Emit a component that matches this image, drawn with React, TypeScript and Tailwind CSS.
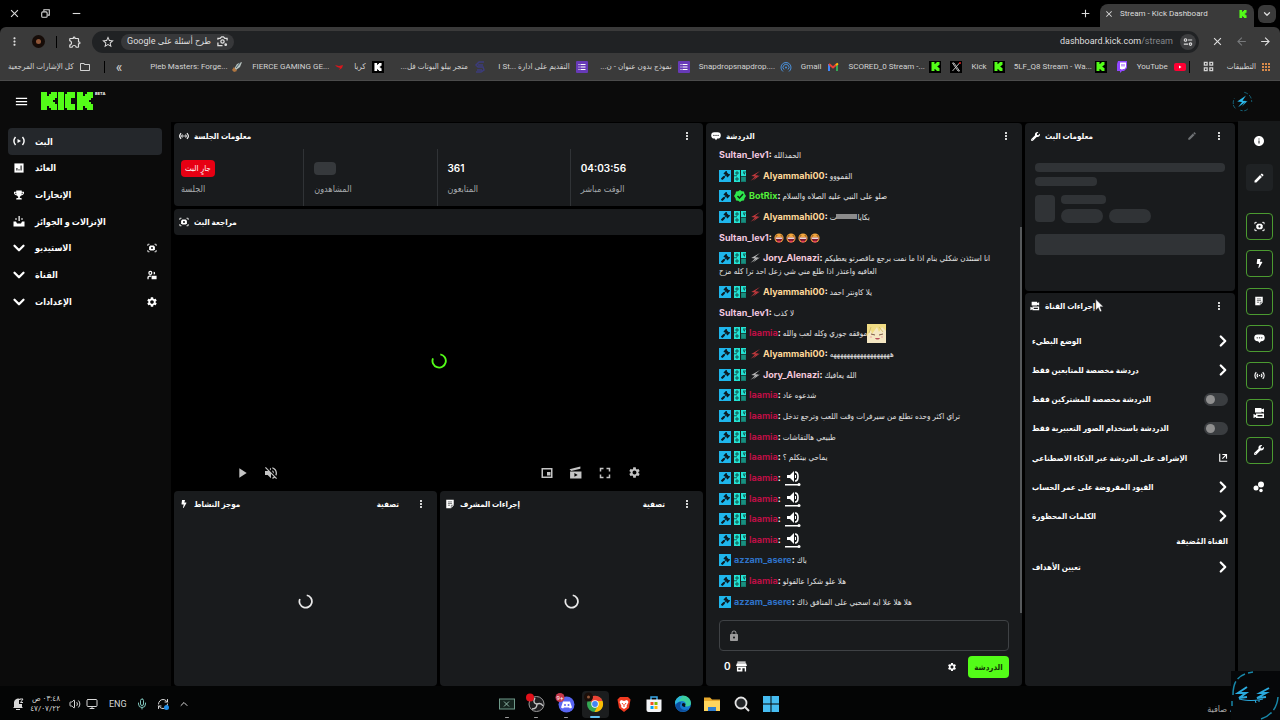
import type { ReactNode } from 'react';
import { FaBolt, FaGavel, FaTrophy, FaWrench } from 'react-icons/fa';
import {
  MdAdd,
  MdApps,
  MdArrowBack,
  MdArrowForward,
  MdClose,
  MdEdit,
  MdFullscreen,
  MdInfo,
  MdLock,
  MdMenu,
  MdMoreVert,
  MdOutlineExtension,
  MdOutlineFolder,
  MdPlayArrow,
  MdRemove,
  MdSettings,
  MdStarOutline,
  MdVolumeOff,
} from 'react-icons/md';
import { SiKick } from 'react-icons/si';
import { ChevronDown, ChevronRight, ChevronUp, Mic, Monitor, RefreshCw, Volume2 } from 'lucide-react';

/* ---------- icons ---------- */

function BroadcastIcon({ className = 'size-3' }: { className?: string }) {
  return (
    <svg viewBox="0 0 24 24" className={className} fill="none" stroke="currentColor" strokeWidth="2.6">
      <path d="M5 5C1 9 1 15 5 19M19 5c4 4 4 10 0 14M8.500 8.500c-2 2-2 5 0 7M15.500 8.500c2 2 2 5 0 7" />
      <circle cx="12" cy="12" r="1.600" fill="currentColor" stroke="none" />
    </svg>
  );
}

function LiveIcon({ className = 'size-3' }: { className?: string }) {
  return (
    <svg viewBox="0 0 24 24" className={className} fill="none" stroke="currentColor" strokeWidth="2.8">
      <path d="M5 4C1 9 1 15 5 20M19 4c4 5 4 11 0 16" />
      <path d="M9 8l7 4-7 4z" fill="currentColor" stroke="none" />
    </svg>
  );
}

function PreviewIcon({ className = 'size-3' }: { className?: string }) {
  return (
    <svg viewBox="0 0 24 24" className={className} fill="none" stroke="currentColor" strokeWidth="2">
      <path d="M2 7V3h4M18 3h4v4M22 17v4h-4M6 21H2v-4" />
      <path d="M8 6h8l3 3v6l-3 3H8l-3-3V9z" fill="currentColor" stroke="none" />
      <circle cx="12" cy="12" r="2.500" fill="#191b1d" stroke="none" />
    </svg>
  );
}

function ChatIcon({ className = 'size-3' }: { className?: string }) {
  return (
    <svg viewBox="0 0 24 24" className={className} fill="currentColor">
      <path d="M8 3h8a7 7 0 0 1 0 15h-1l-3 4-3-4H8A7 7 0 0 1 8 3z" />
      <g fill="#191b1d">
        <circle cx="7" cy="10.500" r="1.500" />
        <circle cx="12" cy="10.500" r="1.500" />
        <circle cx="17" cy="10.500" r="1.500" />
      </g>
    </svg>
  );
}

function NoteIcon({ className = 'size-3' }: { className?: string }) {
  return (
    <svg viewBox="0 0 24 24" className={className}>
      <path d="M3 2h18v13l-6 7H3z" fill="currentColor" />
      <path d="M7 7h10M7 11h10M7 15h5" stroke="#191b1d" strokeWidth="1.400" />
      <path d="M15 22v-7h6" fill="none" stroke="#191b1d" strokeWidth="1.200" />
    </svg>
  );
}

function CamerasIcon({ className = 'size-3' }: { className?: string }) {
  return (
    <svg viewBox="0 0 24 24" className={className} fill="currentColor">
      <path d="M4 2h13v3l5-2v8l-5-2v2H4z" />
      <path d="M6 13h16v9H6v-2l-5 2v-8l5 2zm3 3v3h10v-3z" fillRule="evenodd" />
    </svg>
  );
}

function ChartIcon() {
  return (
    <svg viewBox="0 0 24 24" className="size-[10px]">
      <path d="M1 1h22v22H1z" fill="currentColor" />
      <path d="M7 18v-6M12 18v-3M17 18V6" stroke="#0b0b0b" strokeWidth="2.500" />
    </svg>
  );
}

function DropsIcon() {
  return (
    <svg viewBox="0 0 24 24" className="size-3" fill="currentColor">
      <path d="M1 13h5l2 4h8l2-4h5v10H1z" />
      <path d="M11 2h2.500v10H11zM5 6h2v4H5zM17 6h2v4h-2z" />
    </svg>
  );
}

function ChannelIcon() {
  return (
    <svg viewBox="0 0 24 24" className="size-[10px]" fill="currentColor">
      <path d="M8 2a5 5 0 1 1 0 10A5 5 0 0 1 8 2zm0 3a2 2 0 1 0 0 4 2 2 0 0 0 0-4z" fillRule="evenodd" />
      <path d="M1 22v-6l4-3h5v3H6l-2 2v4z" />
      <path d="M16 4a3.500 3.500 0 1 1 0 7zM11 14h12v8H11z" />
    </svg>
  );
}

function DotsIcon() {
  return (
    <svg viewBox="0 0 24 24" className="size-3" fill="currentColor">
      <circle cx="16" cy="7" r="6" />
      <circle cx="6" cy="14" r="5" />
      <circle cx="16" cy="19" r="3.500" />
    </svg>
  );
}

function ExternalIcon() {
  return (
    <svg viewBox="0 0 24 24" className="size-[9px]" fill="none" stroke="currentColor" strokeWidth="3">
      <path d="M2 2v20h20M9 4h11v11M20 4L9 15" />
    </svg>
  );
}

function ClipIcon() {
  return (
    <svg viewBox="0 0 24 24" className="size-[13px]" fill="currentColor">
      <path d="M1 6l20-5v4L4 9z" />
      <path d="M2 10h21v13H2zm8 3v7l6-3.500z" fillRule="evenodd" />
    </svg>
  );
}

function PipIcon() {
  return (
    <svg viewBox="0 0 24 24" className="size-[12px]" fill="currentColor">
      <path d="M1 2h22v20H1zm3 3v14h16V5z" fillRule="evenodd" />
      <path d="M12 10h7v7h-7z" />
    </svg>
  );
}

function ShopIcon() {
  return (
    <svg viewBox="0 0 24 24" className="size-[11px]" fill="currentColor">
      <path d="M3 1h18v3H3zM2 5h20l2 6H0z" />
      <path d="M2 12h20v11h-3v-7h-5v7H2zm3 4v3h5v-3z" fillRule="evenodd" />
    </svg>
  );
}

function Spinner({ className }: { className: string }) {
  return (
    <svg viewBox="0 0 24 24" className={className} fill="none" stroke="currentColor" strokeWidth="2.800">
      <path d="M14 2a10 10 0 1 1-11 6" />
    </svg>
  );
}

function StrikeIcon({ className }: { className: string }) {
  return (
    <svg viewBox="0 0 24 24" className={className} fill="currentColor">
      <path d="M24 0L3 12l9 1L1 24l20-13-9-1z" />
      <path d="M24 11L7 23l9-10z" />
    </svg>
  );
}

function BoltMark({ className }: { className: string }) {
  return (
    <svg viewBox="0 0 48 48" className={className} fill="none">
      <path d="M3 30A21 21 0 0 1 6 16M28 3c12 3 17 12 17 22M36 41c-5 5-10 5-17 3M3 32c2 5 4 8 8 10" stroke="#176d85" strokeWidth="2" strokeDasharray="9 4" />
      <path d="M32 10L12 24l11 1-9 12 20-14-10-1z" fill="#2bb8ea" />
      <path d="M36 22L22 36l8-11z" fill="#2bb8ea" />
    </svg>
  );
}

function KickWordmark() {
  return (
    <span role="img" aria-label="Kick" className="flex h-[18px] items-center text-[#53fc18]">
      <SiKick className="size-[18px] -mr-px" />
      <svg viewBox="0 0 19 18" className="h-[18px] w-[19px]" fill="currentColor">
        <rect x="1" width="6" height="18" />
        <rect x="10" width="8" height="6" />
        <rect x="8" y="2" width="6" height="14" />
        <rect x="10" y="12" width="8" height="6" />
      </svg>
      <SiKick className="size-[18px]" />
    </span>
  );
}

/* ---------- browser ---------- */

function KickFavicon() {
  return (
    <span className="flex size-3 shrink-0 items-center justify-center bg-black text-[#53fc18]">
      <SiKick className="size-[9px]" />
    </span>
  );
}

function FormsIcon() {
  return (
    <svg viewBox="0 0 12 12" className="size-3 shrink-0">
      <rect width="12" height="12" rx="1" fill="#673ab7" />
      <path d="M4.500 3.500h5M4.500 6h5M4.500 8.500h5" stroke="#fff" />
      <path d="M2.500 3.500h1M2.500 6h1M2.500 8.500h1" stroke="#fff" />
    </svg>
  );
}

interface Bookmark {
  title?: string;
  label: string;
  icon: ReactNode;
  rtl?: boolean;
  cut?: boolean;
}

const bookmarks: Bookmark[] = [
  {
    title: 'Pleb Masters: Forge...',
    label: 'Pleb Masters',
    cut: true,
    icon: (
      <svg viewBox="0 0 12 12" className="size-3 shrink-0">
        <path d="M11 1L6 3 3 8l2 1 4-3z" fill="#b9c4c0" />
        <path d="M3 6L1 9l2 2 3-1z" fill="#b07640" />
        <path d="M9 2L5 7" stroke="#4c6470" />
      </svg>
    ),
  },
  {
    title: 'FIERCE GAMING GE...',
    label: 'Fierce Gaming',
    cut: true,
    icon: (
      <svg viewBox="0 0 12 12" className="size-3 shrink-0" fill="#d8161c">
        <path d="M2 4l4 1 4-1-1 3-3 2 1-2-3-1z" />
      </svg>
    ),
  },
  {
    title: 'كريا',
    label: 'كريا',
    rtl: true,
    icon: (
      <span className="flex size-3 shrink-0 items-center justify-center bg-black text-white">
        <SiKick className="size-[8px]" />
      </span>
    ),
  },
  {
    title: 'متجر بيلو البوتات فل...',
    label: 'متجر بيلو',
    rtl: true,
    cut: true,
    icon: (
      <svg viewBox="0 0 12 12" className="size-3 shrink-0" fill="none" stroke="#3c3c7c" strokeWidth="1.500">
        <path d="M10 1H5L2 4l2 2h5l1 3-3 2H2M4 4h5M3 9h5" />
      </svg>
    ),
  },
  { title: 'التقديم على ادارة \u200eI St...\u200e', label: 'التقديم', rtl: true, cut: true, icon: <FormsIcon /> },
  { title: 'نموذج بدون عنوان - ن...', label: 'نموذج', rtl: true, cut: true, icon: <FormsIcon /> },
  {
    title: 'Snapdropsnapdrop....',
    label: 'Snapdrop',
    cut: true,
    icon: (
      <svg viewBox="0 0 12 12" className="size-3 shrink-0" fill="none" stroke="#4a90d9">
        <path d="M3 10.500a5 5 0 1 1 6 0M4 8.500a3 3 0 1 1 4 0" />
        <circle cx="6" cy="6.500" r="1" fill="#4a90d9" stroke="none" />
      </svg>
    ),
  },
  {
    title: 'Gmail',
    label: 'Gmail',
    icon: (
      <svg viewBox="0 0 12 12" className="size-3 shrink-0" fill="none" strokeWidth="2">
        <path d="M2 10V3" stroke="#4285f4" />
        <path d="M10 10V3" stroke="#34a853" />
        <path d="M2 3l4 3.500L10 3" stroke="#ea4335" />
        <path d="M9 4l2-1.500" stroke="#fbbc04" />
      </svg>
    ),
  },
  { title: 'SCORED_0 Stream -...', label: 'SCORED_0', cut: true, icon: <KickFavicon /> },
  {
    label: 'X',
    icon: (
      <svg viewBox="0 0 12 12" className="size-3 shrink-0">
        <rect width="12" height="12" fill="#000" />
        <path d="M2.500 2l5.500 8h1.500L4 2zM9.500 2l-7 8" fill="none" stroke="#ccc" strokeWidth=".9" />
        <circle cx="10" cy="2" r="1" fill="#d22" />
      </svg>
    ),
  },
  { title: 'Kick', label: 'Kick', icon: <KickFavicon /> },
  { title: '5LF_Q8 Stream - Wa...', label: '5LF_Q8', cut: true, icon: <KickFavicon /> },
  {
    label: 'Twitch',
    icon: (
      <svg viewBox="0 0 12 12" className="size-3 shrink-0">
        <path d="M2 0h9v7l-3 3H6l-2 2v-2H1V3z" fill="#9146ff" />
        <path d="M4 1.500h6V6L8.500 8H7L5.500 9V8H4z" fill="#fff" />
        <path d="M6 3v2.500M8 3v2.500" stroke="#9146ff" />
      </svg>
    ),
  },
  {
    title: 'YouTube',
    label: 'YouTube',
    icon: (
      <svg viewBox="0 0 12 12" className="size-3 shrink-0">
        <rect y="2" width="12" height="8" rx="2" fill="#ff0033" />
        <path d="M5 4.500v3L7.500 6z" fill="#fff" />
      </svg>
    ),
  },
];

function TabStrip() {
  return (
    <div className="flex h-[27px] shrink-0 items-end bg-black text-[#dcdcdc]">
      <div className="flex h-full items-center gap-[18px] pl-2">
        <button aria-label="Close window"><MdClose className="size-[13px]" /></button>
        <button aria-label="Restore window">
          <svg viewBox="0 0 12 12" className="size-[13px]" fill="none" stroke="currentColor">
            <rect x="2.500" y="4.500" width="5" height="5" rx="1" />
            <path d="M4.500 4V2.500h5v5H8" />
          </svg>
        </button>
        <button aria-label="Minimize window"><MdRemove className="size-[13px]" /></button>
      </div>
      <div className="flex-1" />
      <button aria-label="New tab" className="mr-2 flex h-full items-center"><MdAdd className="size-[13px]" /></button>
      <div className="flex h-[23px] w-[154px] items-center rounded-t-lg bg-[#3a3a3a] pb-1 pl-1 pr-[7px]">
        <button aria-label="Close tab"><MdClose className="size-[10px]" /></button>
        <span className="ml-[6px] flex-1 whitespace-nowrap text-[8px] leading-3">Stream - Kick Dashboard</span>
        <SiKick className="size-2 text-[#53fc18]" />
      </div>
      <button aria-label="Search tabs" className="mx-1 mb-1 flex size-[18px] items-center justify-center rounded-md bg-[#3a3a3a]">
        <ChevronDown className="size-[10px]" strokeWidth={3} />
      </button>
    </div>
  );
}

function Toolbar() {
  return (
    <div className="flex h-[29px] shrink-0 items-center rounded-t-md bg-[#3a3a3a] text-[#dfdfdf]">
      <button aria-label="Menu" className="ml-2"><MdMoreVert className="size-[13px]" /></button>
      <button aria-label="Profile" className="ml-[11px] flex size-[13px] items-center justify-center rounded-full bg-[#160c08]">
        <span className="size-[5px] rounded-full bg-[#8f5638]" />
      </button>
      <span className="ml-[11px] h-3 w-px bg-black" />
      <button aria-label="Extensions" className="ml-[11px]"><MdOutlineExtension className="size-[14px]" /></button>
      <div className="ml-[10px] mr-3 flex h-[22px] flex-1 items-center rounded-full bg-[#202224] pl-[9px] pr-[3px]">
        <button aria-label="Bookmark this page"><MdStarOutline className="size-[14px]" /></button>
        <button dir="rtl" className="ml-[6px] flex h-4 items-center gap-[6px] rounded-full bg-[#37383a] px-[6px] text-[9px]">
          <svg viewBox="0 0 12 12" className="size-[11px]" fill="none" stroke="currentColor" strokeWidth="1.400">
            <path d="M1 4V2.500h2.500L5 1h2l1.500 1.500H11V5M1 7v3.500h5" />
            <circle cx="6" cy="6" r="1.800" />
            <circle cx="9.500" cy="9.500" r=".8" />
          </svg>
          <span>طرح أسئلة على Google</span>
        </button>
        <input aria-label="Address" className="min-w-0 flex-1 bg-transparent outline-none" />
        <span className="text-[9px]">dashboard.kick.com<span className="text-[#85888b]">/stream</span></span>
        <button aria-label="Site information" className="ml-[7px] flex size-4 items-center justify-center rounded-full bg-[#3d3e40]">
          <svg viewBox="0 0 12 12" className="size-[10px]" fill="none" stroke="currentColor" strokeWidth="1.300">
            <path d="M6 3.500h5M1 8.500h5" />
            <circle cx="3" cy="3.500" r="1.500" />
            <circle cx="9" cy="8.500" r="1.500" />
          </svg>
        </button>
      </div>
      <div className="flex items-center gap-[11px] pr-2">
        <button aria-label="Stop"><MdClose className="size-[13px]" /></button>
        <button aria-label="Forward"><MdArrowBack className="size-[13px] text-[#77797b]" /></button>
        <button aria-label="Back"><MdArrowForward className="size-[13px]" /></button>
      </div>
    </div>
  );
}

function BookmarksBar() {
  return (
    <div className="flex h-[25px] shrink-0 items-center gap-[9px] border-b border-[#4b4b4b] bg-[#3a3a3a] px-2 pb-[3px] text-[8px] leading-3 text-[#d3d3d3] *:shrink-0">
      <a href="#all" dir="rtl" className="flex items-center gap-[5px] whitespace-nowrap">
        <MdOutlineFolder className="size-3" />كل الإشارات المرجعية
      </a>
      <span className="ml-1 h-3 w-px bg-black" />
      <button aria-label="More bookmarks" className="mr-auto pl-[2px] text-sm leading-3">«</button>
      {bookmarks.map((b) => (
        <a key={b.label} href="#bookmark" aria-label={b.label} className="flex items-center gap-[6px] whitespace-nowrap">
          {b.title && (
            <span dir={b.rtl ? 'rtl' : 'ltr'} className={b.cut ? 'w-[75px]' : ''}>{b.title}</span>
          )}
          {b.icon}
        </a>
      ))}
      <span className="-ml-[6px] h-3 w-px bg-black" />
      <button aria-label="Tab groups" className="ml-1">
        <svg viewBox="0 0 12 12" className="size-[11px]" fill="none" stroke="currentColor" strokeWidth="1.400">
          <path d="M1.500 1.500h3v3h-3zM7.500 1.500h3v3h-3zM1.500 7.500h3v3h-3zM7.500 7.500h3v3h-3z" />
        </svg>
      </button>
      <a href="#apps" className="ml-1 flex items-center gap-1 whitespace-nowrap">
        <span dir="rtl">التطبيقات</span>
        <MdApps className="size-3 text-[#d98a4a]" />
      </a>
    </div>
  );
}

/* ---------- dashboard ---------- */

const expand = <ChevronDown className="size-[18px] shrink-0" strokeWidth={3} />;

const navItems: { label: string; icon: ReactNode; end?: ReactNode; active?: boolean }[] = [
  { label: 'البث', icon: <LiveIcon />, active: true },
  { label: 'العائد', icon: <ChartIcon /> },
  { label: 'الإنجازات', icon: <FaTrophy className="size-[10px]" /> },
  { label: 'الإنزالات و الجوائز', icon: <DropsIcon /> },
  { label: 'الاستيديو', icon: expand, end: <PreviewIcon className="size-[10px]" /> },
  { label: 'القناة', icon: expand, end: <ChannelIcon /> },
  { label: 'الإعدادات', icon: expand, end: <MdSettings className="size-3" /> },
];

function Sidebar() {
  return (
    <aside className="w-[171px] shrink-0 bg-[#0b0b0b] pl-2 pr-[9px] pt-[6px]">
      <nav className="grid h-[187px] auto-rows-fr">
        {navItems.map((item) => (
          <a
            key={item.label}
            href="#nav"
            className={`flex items-center rounded-sm px-1 text-[9px] font-bold ${item.active ? 'bg-[#24272b]' : ''}`}
          >
            <span className="flex w-[14px] justify-center">{item.icon}</span>
            <span dir="rtl" className="ml-[9px]">{item.label}</span>
            <span className="ml-auto flex w-3 justify-center">{item.end}</span>
          </a>
        ))}
      </nav>
    </aside>
  );
}

function PanelHeader({ icon, title, menu = true, children }: { icon: ReactNode; title: string; menu?: boolean; children?: ReactNode }) {
  return (
    <header className="flex h-[26px] shrink-0 items-center gap-1 px-1">
      <span className="flex w-3 justify-center">{icon}</span>
      <h2 dir="rtl" className="text-[8px] font-bold">{title}</h2>
      <div className="ml-auto flex items-center gap-4 pr-[6px]">
        {children}
        {menu && <button aria-label="Options"><MdMoreVert className="size-3" /></button>}
      </div>
    </header>
  );
}

const panel = 'rounded-sm bg-[#191b1d]';

function Stat({ label, children }: { label: string; children: ReactNode }) {
  return (
    <div className="flex-1 border-l border-[#303336] pl-[10px] pt-[9px] first:border-l-0 first:pl-[7px]">
      <div className="flex h-5 items-center text-[10px] font-semibold">{children}</div>
      <div dir="rtl" className="mt-[5px] w-fit text-[9px] leading-3 text-[#a5a9ac]">{label}</div>
    </div>
  );
}

function SessionPanel() {
  return (
    <section className={`${panel} h-[83px] shrink-0`}>
      <PanelHeader icon={<BroadcastIcon className="size-[10px]" />} title="معلومات الجلسة" />
      <div className="flex h-[57px]">
        <Stat label="الجلسة">
          <span dir="rtl" className="rounded-sm bg-[#e70013] px-1 text-[8px] font-normal leading-[17px]">جارٍ البث</span>
        </Stat>
        <Stat label="المشاهدون"><span className="h-[13px] w-[22px] rounded bg-[#36393c]" /></Stat>
        <Stat label="المتابعون">361</Stat>
        <Stat label="الوقت مباشر">04:03:56</Stat>
      </div>
    </section>
  );
}

function Preview() {
  return (
    <section className="flex min-h-0 flex-1 flex-col">
      <div className={panel}>
        <PanelHeader icon={<PreviewIcon className="size-[10px]" />} title="مراجعة البث" menu={false} />
      </div>
      <div className="flex flex-1 flex-col bg-black">
        <div className="flex flex-1 items-center justify-center pt-[30px]">
          <Spinner className="size-4 text-[#53fc18]" />
        </div>
        <div className="flex h-[31px] shrink-0 items-center pl-[60px] pr-[62px] text-[#c4c4c4]">
          <button aria-label="Play"><MdPlayArrow className="size-4" /></button>
          <button aria-label="Unmute" className="ml-[13px]"><MdVolumeOff className="size-4" /></button>
          <div className="ml-auto flex items-center gap-4">
            <button aria-label="Picture in picture"><PipIcon /></button>
            <button aria-label="Clip"><ClipIcon /></button>
            <button aria-label="Fullscreen"><MdFullscreen className="size-[18px] -mx-[2px]" /></button>
            <button aria-label="Settings"><MdSettings className="size-[13px]" /></button>
          </div>
        </div>
      </div>
    </section>
  );
}

function FeedPanel({ icon, title }: { icon: ReactNode; title: string }) {
  return (
    <section className={`${panel} flex flex-1 flex-col`}>
      <PanelHeader icon={icon} title={title}>
        <button dir="rtl" className="text-[8px] font-bold">تصفية</button>
      </PanelHeader>
      <div className="flex flex-1 items-center justify-center">
        <Spinner className="size-[15px] text-[#e8e8e8]" />
      </div>
    </section>
  );
}

/* ---------- chat ---------- */

type Badge = 'mod' | 'bg' | 'red' | 'gray' | 'verified';

interface Message {
  user: string;
  color: string;
  badges: Badge[];
  text?: string;
  more?: string;
  extra?: 'laugh' | 'speaker' | 'girl' | 'censored';
}

const sultan = { user: 'Sultan_lev1', color: 'text-[#f2c8e0]', badges: [] as Badge[] };
const aly = { user: 'Alyammahi00', color: 'text-[#ffd899]', badges: ['mod', 'bg', 'red'] as Badge[] };
const jory = { user: 'Jory_Alenazi', color: 'text-[#f5c9dc]', badges: ['mod', 'bg', 'gray'] as Badge[] };
const laamia = { user: 'laamia', color: 'text-[#bc0f45]', badges: ['mod', 'bg'] as Badge[] };
const azzam = { user: 'azzam_asere', color: 'text-[#2f73c9]', badges: ['mod'] as Badge[] };

const messages: Message[] = [
  { ...sultan, text: 'الحمدالله' },
  { ...aly, text: 'القمووو' },
  { user: 'BotRix', color: 'text-[#53f03a]', badges: ['mod', 'verified'], text: 'صلو على النبي عليه الصلاه والسلام' },
  { ...aly, extra: 'censored' },
  { ...sultan, extra: 'laugh' },
  {
    ...jory,
    text: 'انا استئذن شكلي بنام اذا ما نمت برجع ماقصرتو يعطيكم',
    more: 'العافيه واعتذر اذا طلع مني شي زعل احد ترا كله مزح',
  },
  { ...aly, text: 'يلا كاونتر احمد' },
  { ...sultan, text: 'لا كذب' },
  { ...laamia, text: 'موفقه جوري وكله لعب والله', extra: 'girl' },
  { ...aly, text: 'ههههههههههههههههههه' },
  { ...jory, text: 'الله يعافيك' },
  { ...laamia, text: 'شدعوه عاد' },
  { ...laamia, text: 'تراي اكثر وحده تطلع من سيرفرات وقت اللعب وترجع تدخل' },
  { ...laamia, text: 'طبيعي هالتفاشات' },
  { ...laamia, text: 'يماحي بيتكلم ؟' },
  { ...laamia, extra: 'speaker' },
  { ...laamia, extra: 'speaker' },
  { ...laamia, extra: 'speaker' },
  { ...laamia, extra: 'speaker' },
  { ...azzam, text: 'باك' },
  { ...laamia, text: 'هلا علو شكرا عالفولو' },
  { ...azzam, text: 'هلا هلا علا ايه اسحبي على المنافق ذاك' },
];

function ChatBadge({ kind }: { kind: Badge }) {
  if (kind === 'mod') {
    return (
      <span className="flex size-3 shrink-0 items-center justify-center bg-[#1fb6ec] text-[#0c1a22]">
        <FaGavel className="size-[9px]" />
      </span>
    );
  }
  if (kind === 'bg') {
    return (
      <svg viewBox="0 0 24 24" className="size-3 shrink-0" fill="none">
        <path d="M0 0h12v24H0zM14 0h10v12H14z" fill="#22e3d4" />
        <path d="M14 13h10v11H14z" fill="#12796c" />
        <path d="M4 4h4v4H4zM4 16h4v4H4zM0 11.500h6M18 4h6M18 6h3v3" stroke="#10302f" strokeWidth="1.500" />
        <path d="M15 16h8M15 20h8" stroke="#2fd2bd" />
      </svg>
    );
  }
  if (kind === 'verified') {
    return (
      <svg viewBox="0 0 24 24" className="size-3 shrink-0">
        <path d="M12 0l3.500 2.500L20 3l1 4.500 3 4.500-3 4.500-1 4.500-4.500.5L12 24l-3.500-2.500L4 21l-1-4.500L0 12l3-4.500L4 3l4.500-.5z" fill="#2ee84e" />
        <path d="M7 12l4 4 7-8" fill="none" stroke="#0c2a12" strokeWidth="3" />
      </svg>
    );
  }
  return <StrikeIcon className={kind === 'red' ? 'ml-px size-[10px] text-[#c4393d]' : 'ml-px size-[10px] text-[#b9b9b9]'} />;
}

function Laugh() {
  return (
    <svg viewBox="0 0 12 12" className="size-[10px]">
      <circle cx="6" cy="6" r="5.500" fill="#f3a53c" />
      <path d="M1.500 5.500h9c0 6.500-9 6.500-9 0z" fill="#7a1730" />
      <path d="M2 5.500h8V7H2z" fill="#fff" />
      <path d="M2 4l2-1M10 4L8 3" stroke="#5a3310" />
      <path d="M3 10c2-1 4-1 6 0-2 2-4 2-6 0z" fill="#e0405a" />
    </svg>
  );
}

function Speaker() {
  return (
    <svg viewBox="0 0 16 16" className="ml-1 size-4" fill="#fff">
      <path d="M2 5h3l4-4v11L5 8H2z" />
      <path d="M10 2c4 0 4 9 0 9" fill="none" stroke="#fff" strokeWidth="1.600" />
      <path d="M10.500 5v3" stroke="#fff" />
      <path d="M0 14h13v1.500H0z" />
      <circle cx="14" cy="14.500" r="1.500" />
    </svg>
  );
}

function GirlEmote() {
  return (
    <svg viewBox="0 0 19 19" className="size-[19px]">
      <rect width="19" height="19" fill="#f4e6c2" />
      <path d="M0 0h19v7L15 3l-3 5-2-5-5 7-1-4-4 6z" fill="#f0dc83" />
      <path d="M4 10l4 1M12 11l4-1" stroke="#7b5a4a" />
      <path d="M8 14c1 2 4 2 5 0z" fill="#b8505c" />
      <path d="M3 13h2M14 13h2" stroke="#f2a5a5" />
      <path d="M12 3l4 5M4 3l-2 6" stroke="#cdb765" strokeWidth=".8" />
    </svg>
  );
}

function MessageRow({ message: m }: { message: Message }) {
  return (
    <li className="text-[8px] leading-[14px] text-[#e3e3e3]">
      <div className="flex h-[14px] items-center whitespace-nowrap">
        <span className="flex items-center gap-[3px]">
          {m.badges.map((b) => <ChatBadge key={b} kind={b} />)}
          <span className="text-[9px] font-bold text-white">
            <span className={m.color}>{m.user}</span>:
          </span>
        </span>
        {m.text && <span dir="rtl" className="ml-[2px]">{m.text}</span>}
        {m.extra === 'girl' && <GirlEmote />}
        {m.extra === 'speaker' && <Speaker />}
        {m.extra === 'laugh' && (
          <span className="ml-[2px] flex gap-[2px]"><Laugh /><Laugh /><Laugh /><Laugh /></span>
        )}
        {m.extra === 'censored' && (
          <span dir="rtl" className="ml-[2px] flex items-center">
            <span>بكايا</span><span className="h-[5px] w-[21px] bg-[#8b8b8b]" /><span>ت</span>
          </span>
        )}
      </div>
      {m.more && <div dir="rtl" className="h-[13px] w-fit whitespace-nowrap leading-[13px]">{m.more}</div>}
    </li>
  );
}

function ChatPanel() {
  return (
    <section className={`${panel} relative flex min-w-0 flex-[316] flex-col`}>
      <PanelHeader icon={<ChatIcon className="size-[10px]" />} title="الدردشة" />
      <ul className="-mt-px flex min-h-0 flex-1 flex-col justify-between pl-[13px]">
        {messages.map((m, i) => <MessageRow key={i} message={m} />)}
      </ul>
      <div className="absolute bottom-[73px] right-0 top-[104px] w-[2px] bg-[#56595b]" />
      <div className="mx-[13px] mt-[11px] flex h-[31px] items-center rounded-sm border border-[#3f4245] px-2">
        <MdLock className="size-3 text-[#9b9b9b]" />
        <input aria-label="Chat message" className="min-w-0 flex-1 bg-transparent outline-none" />
      </div>
      <div className="flex h-[35px] items-center px-[13px] pb-1">
        <span className="ml-[5px] text-[10px] font-semibold">0</span>
        <button aria-label="Shop" className="ml-[5px]"><ShopIcon /></button>
        <button aria-label="Chat settings" className="ml-auto"><MdSettings className="size-[10px]" /></button>
        <button dir="rtl" className="ml-[11px] h-[22px] w-[41px] rounded-sm bg-[#53fc18] text-[8px] font-bold text-[#123006]">
          الدردشة
        </button>
      </div>
    </section>
  );
}

/* ---------- right column ---------- */

function InfoPanel() {
  return (
    <section className={`${panel} h-[168px] shrink-0`}>
      <PanelHeader icon={<FaWrench className="size-[9px]" />} title="معلومات البث">
        <button aria-label="Edit stream info"><MdEdit className="size-[10px] text-[#6e7174]" /></button>
      </PanelHeader>
      <div className="px-[10px] pt-[14px]">
        <div className="h-[9px] rounded bg-[#303336]" />
        <div className="mt-[5px] h-[9px] w-[62px] rounded bg-[#303336]" />
        <div className="mt-[9px] flex gap-[6px]">
          <div className="h-[27px] w-5 rounded bg-[#303336]" />
          <div>
            <div className="h-[9px] w-[45px] rounded bg-[#303336]" />
            <div className="mt-[5px] flex gap-[6px]">
              <div className="h-[14px] w-[42px] rounded-full bg-[#303336]" />
              <div className="h-[14px] w-[42px] rounded-full bg-[#303336]" />
            </div>
          </div>
        </div>
        <div className="mt-[11px] h-[21px] rounded bg-[#303336]" />
      </div>
    </section>
  );
}

const actions: { label: string; kind: 'link' | 'toggle' | 'external' }[] = [
  { label: 'الوضع البطيء', kind: 'link' },
  { label: 'دردشة مخصصة للمتابعين فقط', kind: 'link' },
  { label: 'الدردشة مخصصة للمشتركين فقط', kind: 'toggle' },
  { label: 'الدردشة باستخدام الصور التعبيرية فقط', kind: 'toggle' },
  { label: 'الإشراف على الدردشة عبر الذكاء الاصطناعي', kind: 'external' },
  { label: 'القيود المفروضة على عمر الحساب', kind: 'link' },
  { label: 'الكلمات المحظورة', kind: 'link' },
];

function ActionRow({ label, kind }: { label: string; kind: 'link' | 'toggle' | 'external' }) {
  const row = 'flex items-center justify-between whitespace-nowrap text-[8px] font-bold';
  if (kind === 'toggle') {
    return (
      <label className={row}>
        <span dir="rtl">{label}</span>
        <input
          type="checkbox"
          className="h-[13px] w-6 appearance-none rounded-full bg-[#3a3d40] p-[2px] before:block before:size-[9px] before:rounded-full before:bg-[#8f8f8f] checked:bg-[#53fc18]"
        />
      </label>
    );
  }
  return (
    <a href="#action" className={row}>
      <span dir="rtl">{label}</span>
      {kind === 'link' ? <ChevronRight className="-mr-1 size-[18px]" strokeWidth={3} /> : <ExternalIcon />}
    </a>
  );
}

function ActionsPanel() {
  return (
    <section className={`${panel} min-h-0 flex-1`}>
      <PanelHeader icon={<CamerasIcon className="size-[10px]" />} title="إجراءات القناة" />
      <div className="px-[7px] pt-[7px]">
        <div className="grid h-[205px] auto-rows-fr">
          {actions.map((a) => <ActionRow key={a.label} {...a} />)}
        </div>
        <h3 dir="rtl" className="h-[21px] text-[8px] font-bold leading-[21px]">القناة المُضيفة</h3>
        <div className="grid h-[29px]"><ActionRow label="تعيين الأهداف" kind="link" /></div>
      </div>
    </section>
  );
}

const railItems: { label: string; icon: ReactNode }[] = [
  { label: 'Preview', icon: <PreviewIcon className="size-[11px]" /> },
  { label: 'Activity', icon: <FaBolt className="size-[9px]" /> },
  { label: 'Mod actions', icon: <NoteIcon className="size-[10px]" /> },
  { label: 'Chat', icon: <ChatIcon className="size-[11px]" /> },
  { label: 'Session', icon: <BroadcastIcon className="size-[11px]" /> },
  { label: 'Channel actions', icon: <CamerasIcon /> },
  { label: 'Stream info', icon: <FaWrench className="size-[10px]" /> },
];

function Rail() {
  return (
    <aside className="-mt-px flex w-[42px] shrink-0 flex-col items-center bg-[#17191a] pt-[6px]">
      <button aria-label="Information" className="flex size-[27px] items-center justify-center"><MdInfo className="size-3" /></button>
      <button aria-label="Edit layout" className="mt-[10px] flex size-[27px] items-center justify-center rounded-sm bg-[#1f2224]">
        <MdEdit className="size-3" />
      </button>
      <div className="mt-[17px] grid h-[298px] auto-rows-fr place-items-center">
        {railItems.map((r) => (
          <button key={r.label} aria-label={r.label} className="flex size-[27px] items-center justify-center rounded-sm border border-[#4b9b30]">
            {r.icon}
          </button>
        ))}
        <button aria-label="Multistream"><DotsIcon /></button>
      </div>
    </aside>
  );
}

/* ---------- taskbar ---------- */

const apps: { label: string; icon: ReactNode; running?: boolean; active?: boolean }[] = [
  {
    label: 'Terminal',
    running: true,
    icon: (
      <svg viewBox="0 0 18 18" className="size-[18px]" fill="none">
        <rect x="1.500" y="4" width="15" height="10" fill="#15251f" stroke="#6f9a8a" />
        <path d="M6 6.500l5 5M11 6.500l-5 5" stroke="#8fb8a8" />
      </svg>
    ),
  },
  {
    label: 'OBS Studio',
    running: true,
    icon: (
      <svg viewBox="0 0 18 18" className="size-[18px] overflow-visible" fill="none">
        <circle cx="9.500" cy="9" r="7.500" fill="#1d1d1f" stroke="#9b9b9b" />
        <path d="M8 3c-2 3-1 6 2 6M10 9c3-1 5 0 6 2M10 9c0 3-2 5-5 5" stroke="#c4c4c4" strokeWidth="1.400" />
        <circle cx="3" cy="2.500" r="4" fill="#e2101a" />
      </svg>
    ),
  },
  {
    label: 'Discord',
    running: true,
    icon: (
      <svg viewBox="0 0 18 18" className="size-[18px] overflow-visible">
        <circle cx="9.500" cy="9.500" r="8" fill="#5865f2" />
        <path d="M6 6.500h7l2 6-2 1-1-1H7l-1 1-2-1z" fill="#fff" />
        <circle cx="8" cy="10" r="1" fill="#5865f2" />
        <circle cx="11.500" cy="10" r="1" fill="#5865f2" />
        <circle cx="3" cy="2.500" r="4.500" fill="#c8394b" />
        <text x="3" y="5" fontSize="6" textAnchor="middle" fill="#fff">9+</text>
      </svg>
    ),
  },
  {
    label: 'Chrome',
    active: true,
    icon: (
      <svg viewBox="0 0 18 18" className="size-[18px] overflow-visible">
        <circle cx="9" cy="9" r="8" fill="#34a853" />
        <path d="M9 9L2 5a8 8 0 0 1 14.500 1H9z" fill="#ea4335" />
        <path d="M9 6h7.500A8 8 0 0 1 8.500 17L12 10z" fill="#fbbc04" />
        <circle cx="9" cy="9" r="3.700" fill="#fff" />
        <circle cx="9" cy="9" r="2.900" fill="#4285f4" />
        <circle cx="2.500" cy="2" r="4.500" fill="#1a0e09" />
        <circle cx="2.500" cy="2" r="1.500" fill="#8f5638" />
      </svg>
    ),
  },
  {
    label: 'Brave',
    icon: (
      <svg viewBox="0 0 18 18" className="size-[18px]">
        <path d="M5 2h8l2.500 2.500L14 13l-5 4-5-4L2.500 4.500z" fill="#f13a20" />
        <path d="M6 5l3 1 3-1 1.500 2-2 4 .5 1-3 2-3-2 .5-1-2-4z" fill="#fff" />
        <path d="M7 8l1 1.500M11 8l-1 1.500M9 9v3" stroke="#f13a20" />
      </svg>
    ),
  },
  {
    label: 'Microsoft Store',
    icon: (
      <svg viewBox="0 0 18 18" className="size-[18px]">
        <path d="M6 5V2h6v3" fill="none" stroke="#39a6e8" strokeWidth="1.500" />
        <path d="M1.500 4.500h15V15a2 2 0 0 1-2 2h-11a2 2 0 0 1-2-2z" fill="#f2f4f7" />
        <path d="M5.500 7h3v3h-3z" fill="#f25022" />
        <path d="M9.500 7h3v3h-3z" fill="#7fba00" />
        <path d="M5.500 11h3v3h-3z" fill="#00a4ef" />
        <path d="M9.500 11h3v3h-3z" fill="#ffb900" />
      </svg>
    ),
  },
  {
    label: 'Edge',
    icon: (
      <svg viewBox="0 0 18 18" className="size-[18px]">
        <circle cx="9" cy="9" r="8" fill="#1579d0" />
        <path d="M1 9a8 8 0 0 1 16-1c0 4-5 4-6 3 2-2 0-5-3-5-4 0-7 3-7 3z" fill="#3bcf9f" />
        <path d="M1 9a8 8 0 0 1 8-8c-2 2-4 3-4 6z" fill="#2bb3e0" />
        <path d="M7 8c-3 4 1 9 7 6-3 5-13 3-12-4 1-3 5-4 5-2z" fill="#0d4f9e" />
        <path d="M9 8c-2 1-1 4 2 4 1 0 0 0 0-1 1-2 0-3-2-3z" fill="#081018" />
      </svg>
    ),
  },
  {
    label: 'File Explorer',
    icon: (
      <svg viewBox="0 0 18 18" className="size-[18px]">
        <path d="M1 2.500h6l2 2h8V15H1z" fill="#e8a92c" />
        <path d="M1 6h16v10H1z" fill="#ffd55c" />
        <path d="M5 12h8v4H5z" fill="#2f7fd0" />
      </svg>
    ),
  },
  {
    label: 'Search',
    icon: (
      <svg viewBox="0 0 18 18" className="size-[18px]" fill="none">
        <circle cx="8" cy="8" r="5.500" stroke="#e4e4e4" strokeWidth="1.800" fill="#222527" />
        <path d="M12 12l4 4" stroke="#e4e4e4" strokeWidth="2" />
      </svg>
    ),
  },
  {
    label: 'Start',
    icon: (
      <svg viewBox="0 0 18 18" className="size-[18px]" fill="#46bdf2">
        <path d="M1 1h7.500v7.500H1zM9.500 1H17v7.500H9.500zM1 9.500h7.500V17H1zM9.500 9.500H17V17H9.500z" />
      </svg>
    ),
  },
];

function Taskbar() {
  return (
    <footer className="relative flex h-[34px] shrink-0 items-center justify-center bg-[#040505] pt-[2px] text-[#d8d8d8]">
      <div className="absolute inset-y-0 left-3 flex items-center pt-[2px] text-[9px] leading-[10px]">
        <button aria-label="Notifications">
          <svg viewBox="0 0 12 12" className="size-3" fill="currentColor">
            <path d="M2 9V4a4 4 0 0 1 7-2H7v4h3v3l1 1H1zM4 11h4v1H4z" />
            <path d="M8 1h3L8.500 4.500H11" fill="none" stroke="currentColor" />
          </svg>
        </button>
        <div className="ml-1 w-8 text-right text-[8px]">
          <div dir="rtl">٠٣:٤٨ ص</div>
          <bdo dir="ltr">٤٧/٠٧/٢٢</bdo>
        </div>
        <Volume2 className="ml-[9px] size-3" />
        <Monitor className="ml-[5px] size-3" />
        <span className="ml-[11px]">ENG</span>
        <Mic className="ml-[9px] size-3 text-[#7fc4bb]" />
        <span className="relative ml-[9px]">
          <RefreshCw className="size-3" />
          <span className="absolute bottom-0 right-0 size-[5px] rounded-full bg-[#1f8de6]" />
        </span>
        <ChevronUp className="ml-[9px] size-3" />
      </div>
      <div className="mr-[2px] grid w-[293px] grid-cols-10 place-items-center">
        {apps.map((a) => (
          <button
            key={a.label}
            aria-label={a.label}
            className={`relative flex size-[27px] items-center justify-center rounded-sm ${a.active ? 'bg-[#1b1d1e]' : ''}`}
          >
            {a.icon}
            {a.running && <span className="absolute bottom-0 h-px w-1 rounded-full bg-[#a0a0a0]" />}
            {a.active && <span className="absolute bottom-0 h-[2px] w-[10px] rounded-full bg-[#62c1f0]" />}
          </button>
        ))}
      </div>
      <span dir="rtl" className="absolute bottom-[5px] right-[48px] text-[9px] leading-3 text-[#a8a8a8]">، صافية</span>
      <div className="absolute bottom-0 right-0 size-[49px] bg-[#060709]">
        <svg viewBox="0 0 49 49" className="size-full" fill="none" stroke="#2aa9dd">
          <path d="M2 24C2 12 6 6 14 3M17 2l5-1M47 26c-1 12-8 19-17 22M1 30v5" stroke="#1887a8" strokeWidth="1.500" strokeDasharray="14 3" />
          <path d="M16 16L7 22h8l-7 5 8-1M38 17l-9 5h6l-9 5 9-1" strokeWidth="2" />
          <path d="M8 28c8 2 16 2 24 0M24 29l1 3M28 29v2" />
        </svg>
      </div>
    </footer>
  );
}

export default function App() {
  return (
    <div className="relative flex h-screen min-h-[720px] flex-col overflow-hidden bg-black font-['Roboto','DejaVu_Sans_Condensed','DejaVu_Sans',sans-serif] text-white">
      <TabStrip />
      <Toolbar />
      <BookmarksBar />
      <div className="flex min-h-0 flex-1 flex-col font-['Inter','DejaVu_Sans_Condensed','DejaVu_Sans',sans-serif]">
        <header className="flex h-[41px] shrink-0 items-center bg-[#0b0b0b] pb-px pl-[14px] pr-[27px]">
          <button aria-label="Toggle menu"><MdMenu className="size-[15px]" /></button>
          <a href="#home" className="ml-[11px] flex items-start">
            <KickWordmark />
            <span className="ml-px text-[4px] font-bold leading-[4px]">BETA</span>
          </a>
          <button aria-label="Account" className="ml-auto"><BoltMark className="size-[21px]" /></button>
        </header>
        <div className="flex min-h-0 flex-1">
          <Sidebar />
          <main className="flex min-w-0 flex-1 gap-[3px] px-[3px] pt-px">
            <div className="flex min-w-0 flex-[529] flex-col gap-[3px]">
              <SessionPanel />
              <Preview />
              <div className="flex h-[195px] shrink-0 gap-[3px]">
                <FeedPanel icon={<FaBolt className="size-2" />} title="موجز النشاط" />
                <FeedPanel icon={<NoteIcon className="size-[10px]" />} title="إجراءات المشرف" />
              </div>
            </div>
            <ChatPanel />
            <div className="flex min-w-0 flex-[210] flex-col gap-[2px]">
              <InfoPanel />
              <ActionsPanel />
            </div>
          </main>
          <Rail />
        </div>
      </div>
      <Taskbar />
      <svg viewBox="0 0 12 16" className="pointer-events-none absolute left-[1095px] top-[299px] h-[14px] w-[10px]">
        <path d="M1 0v13l3-3 2 5 2-1-2-5h4z" fill="#fff" stroke="#222" strokeWidth=".5" />
      </svg>
    </div>
  );
}
